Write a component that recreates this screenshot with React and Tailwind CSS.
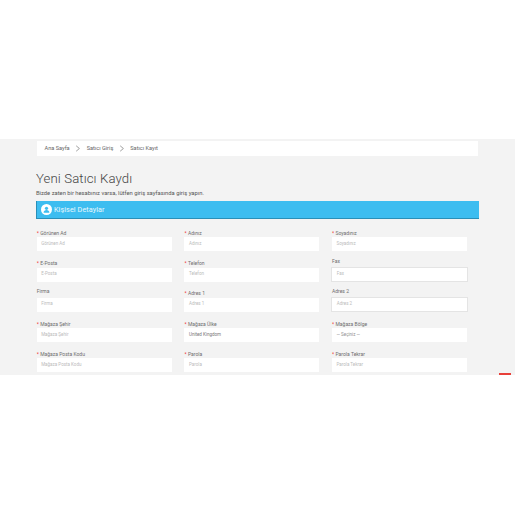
const font = { fontFamily: "Roboto, sans-serif" };

function Field({ label, placeholder, req, value, muted, bordered, wideGap }) {
  return (
    <div className="flex flex-col justify-end">
      <label
        className={`text-[5px] leading-[6px] text-[#6e6e6e] h-[6px] flex items-center ${
          bordered || wideGap ? "mb-[3.5px]" : "mb-[1.5px]"
        }`}
      >
        {req && <span className="text-[#f03030] w-[3.5px]">*</span>}
        {label}
      </label>
      <div
        className={`bg-white flex items-center text-[4.5px] ${
          value ? (muted ? "text-[#909090]" : "text-[#777777]") : "text-[#bbbbbb]"
        } ${
          bordered
            ? "h-[14.5px] border border-[#e4e4e4] pl-[4.5px] -ml-[0.7px] w-[136.7px]"
            : "h-[14px] pl-[4.5px]"
        }`}
      >
        {value || placeholder}
      </div>
    </div>
  );
}

function Chevron() {
  return (
    <svg width="6" height="7" viewBox="0 0 6 7" className="mx-[5.5px]" fill="none" stroke="#777777" strokeWidth="0.7">
      <path d="M1.2 0.8 L4.4 3.5 L1.2 6.2" />
    </svg>
  );
}

const rows = [
  { label: "Görünen Ad", placeholder: "Görünen Ad", req: true },
  { label: "Adınız", placeholder: "Adınız", req: true },
  { label: "Soyadınız", placeholder: "Soyadınız", req: true },
  { label: "E-Posta", placeholder: "E-Posta", req: true },
  { label: "Telefon", placeholder: "Telefon", req: true },
  { label: "Fax", placeholder: "Fax", bordered: true },
  { label: "Firma", placeholder: "Firma", wideGap: true },
  { label: "Adres 1", placeholder: "Adres 1", req: true },
  { label: "Adres 2", placeholder: "Adres 2", bordered: true },
  { label: "Mağaza Şehir", placeholder: "Mağaza Şehir", req: true },
  { label: "Mağaza Ülke", value: "United Kingdom", req: true },
  { label: "Mağaza Bölge", value: "— Seçiniz —", muted: true, req: true },
  { label: "Mağaza Posta Kodu", placeholder: "Mağaza Posta Kodu", req: true },
  { label: "Parola", placeholder: "Parola", req: true },
  { label: "Parola Tekrar", placeholder: "Parola Tekrar", req: true },
];

export default function App() {
  return (
    <div className="w-[515px] h-[515px] bg-white overflow-hidden" style={font}>
      <div className="h-[139px]" />
      <div className="relative h-[236px] bg-[#f3f3f3] overflow-hidden">
        <div className="ml-[37px] mt-[2px] w-[441px] h-[15px] bg-white flex items-center pl-[7.5px] text-[5.6px] text-[#666666]">
          <span>Ana Sayfa</span>
          <Chevron />
          <span>Satıcı Giriş</span>
          <Chevron />
          <span>Satıcı Kayıt</span>
        </div>
        <h1 className="ml-[36px] mt-[14px] text-[13.2px] leading-[18px] font-light tracking-[0.1px] text-[#444444]">Yeni Satıcı Kaydı</h1>
        <p className="ml-[36px] mt-[2px] text-[5.8px] leading-[7px] text-[#555555]">
          Bizde zaten bir hesabınız varsa, lütfen giriş sayfasında giriş yapın.
        </p>
        <div className="ml-[36px] mt-[4px] w-[443px] h-[18px] bg-[#3dbdf0] border-b border-b-[#2a8fb8] border-l border-l-[#2a8fb8] flex items-center pl-[4px]">
          <span className="w-[11px] h-[11px] rounded-full bg-white flex items-center justify-center">
            <svg width="7" height="7" viewBox="0 0 24 24" fill="#3dbdf0">
              <circle cx="12" cy="8" r="5.5" />
              <path d="M2 23c0-6 4.5-9 10-9s10 3 10 9z" />
            </svg>
          </span>
          <span className="ml-[2px] pt-[1px] text-[7.2px] font-normal tracking-[0.1px] text-white/90">Kişisel Detaylar</span>
        </div>
        <div className="ml-[36.7px] mt-[2px] w-[431px] grid grid-cols-[135.3px_135px_135.3px] gap-x-[12.5px]">
          {rows.map((f, i) => (
            <div key={i} className="h-[30.25px] flex flex-col justify-end">
              <Field {...f} />
            </div>
          ))}
        </div>
        <div className="absolute right-[4px] bottom-0 w-[12px] h-[2px] bg-[#e8403a]" />
      </div>
    </div>
  );
}
